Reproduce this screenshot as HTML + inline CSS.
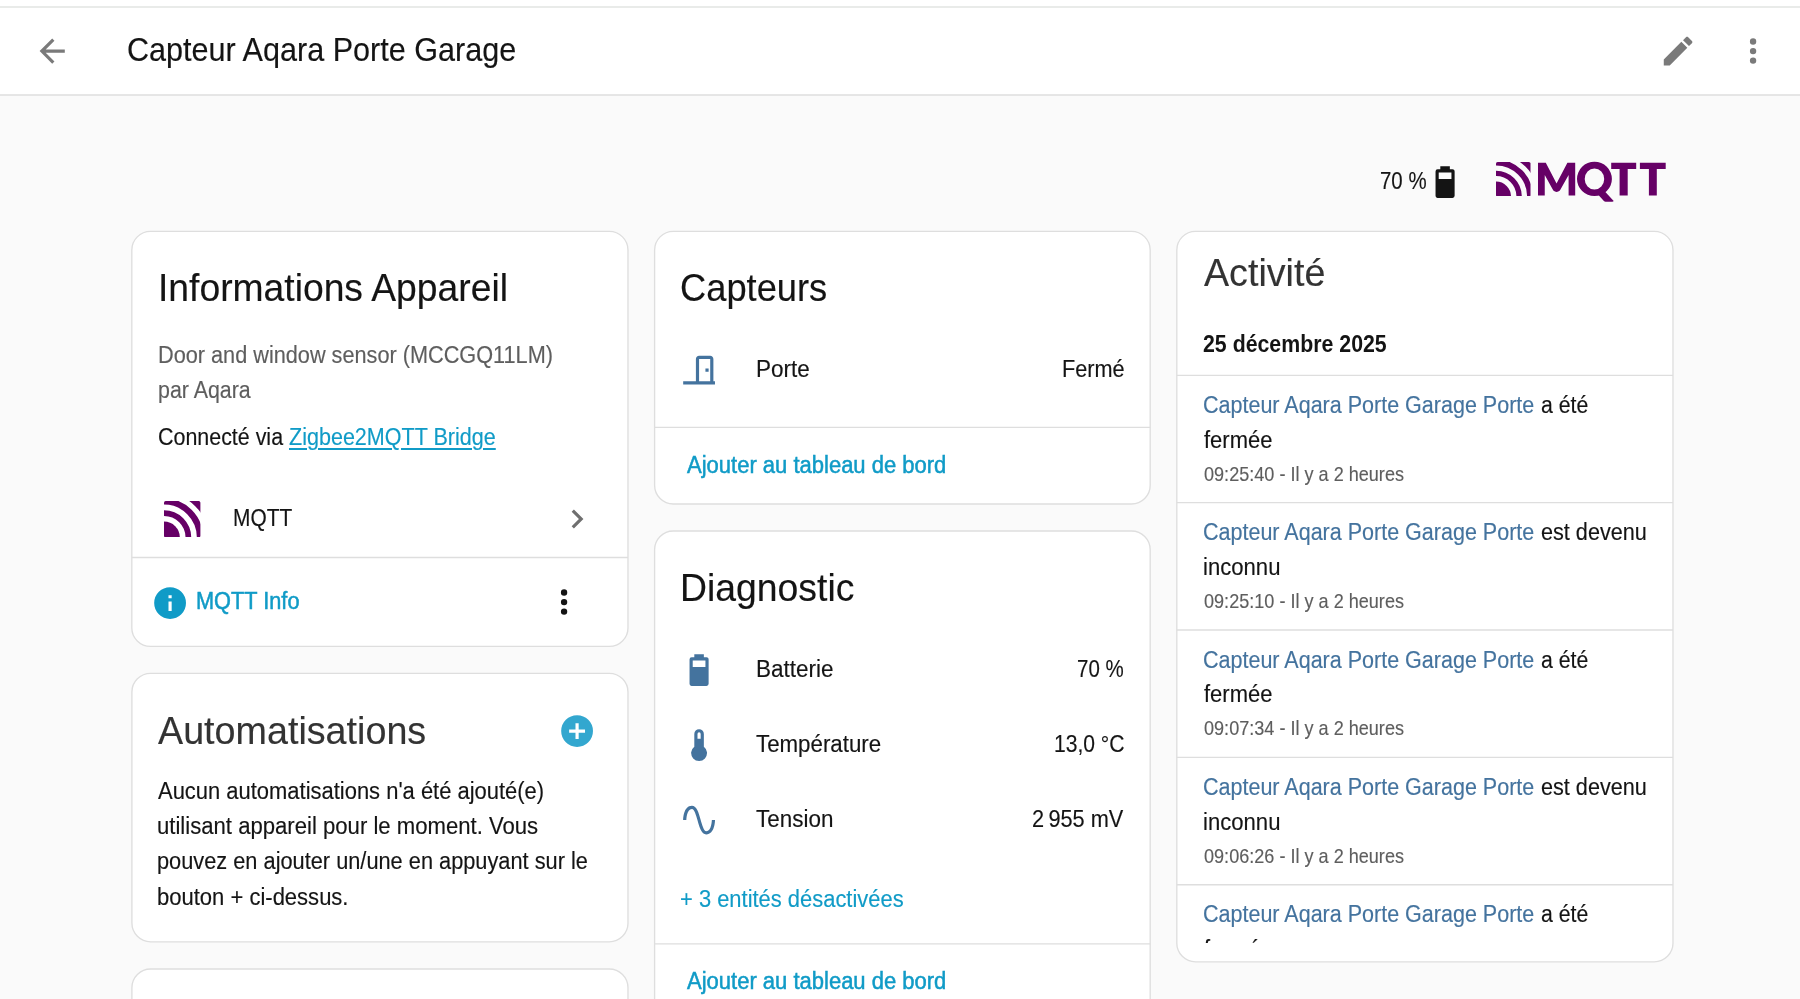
<!DOCTYPE html>
<html lang="fr"><head><meta charset="utf-8"><title>Capteur Aqara Porte Garage</title>
<style>
html,body{margin:0;padding:0}
body{width:1800px;height:999px;overflow:hidden;position:relative;background:#fafafa;font-family:"Liberation Sans",sans-serif;color:#141414}
.t{position:absolute;white-space:pre;margin:0;transform-origin:0 0}
.card{position:absolute;box-sizing:border-box;background:#fff;border:1.6px solid #e0e0e0;border-radius:19px}
.hr{position:absolute;height:1.6px;background:#e0e0e0}
svg{display:block}
.ic{position:absolute;width:38.16px;height:38.16px}
#clip{position:absolute;left:1177px;top:232px;width:496px;height:711px;overflow:hidden}
</style></head><body>

<svg style="position:absolute;left:0;top:0" width="1800" height="999" viewBox="0 0 1800 999"><rect x="0" y="0" width="1800" height="95" fill="#fff"/><line x1="0" y1="95.0" x2="1800" y2="95.0" stroke="#dedede" stroke-width="1.35"/><line x1="0" y1="7.0" x2="1800" y2="7.0" stroke="#e2e4e2" stroke-width="1.5"/><rect x="131.8" y="231.4" width="496.2" height="415.0" rx="18.75" fill="#fff" stroke="#dedede" stroke-width="1.35"/><rect x="131.9" y="673.3" width="496.1" height="268.5" rx="18.75" fill="#fff" stroke="#dedede" stroke-width="1.35"/><rect x="131.9" y="969.0" width="496.1" height="231.0" rx="18.75" fill="#fff" stroke="#dedede" stroke-width="1.35"/><rect x="654.6" y="231.4" width="495.6" height="272.6" rx="18.75" fill="#fff" stroke="#dedede" stroke-width="1.35"/><rect x="654.6" y="531.0" width="495.6" height="669.0" rx="18.75" fill="#fff" stroke="#dedede" stroke-width="1.35"/><rect x="1176.8" y="231.4" width="496.2" height="730.4" rx="18.75" fill="#fff" stroke="#dedede" stroke-width="1.35"/><line x1="131.8" y1="557.45" x2="628.0" y2="557.45" stroke="#dedede" stroke-width="1.35"/><line x1="654.6" y1="427.30" x2="1150.2" y2="427.30" stroke="#dedede" stroke-width="1.35"/><line x1="654.6" y1="943.80" x2="1150.2" y2="943.80" stroke="#dedede" stroke-width="1.35"/><line x1="1176.8" y1="375.30" x2="1673.0" y2="375.30" stroke="#dedede" stroke-width="1.35"/><line x1="1176.8" y1="502.65" x2="1673.0" y2="502.65" stroke="#dedede" stroke-width="1.35"/><line x1="1176.8" y1="630.00" x2="1673.0" y2="630.00" stroke="#dedede" stroke-width="1.35"/><line x1="1176.8" y1="757.35" x2="1673.0" y2="757.35" stroke="#dedede" stroke-width="1.35"/><line x1="1176.8" y1="884.70" x2="1673.0" y2="884.70" stroke="#dedede" stroke-width="1.35"/></svg>
<svg class="ic" style="left:32.89px;top:31.77px" viewBox="0 0 24 24"><path fill="#7a7a7a" d="M20,11V13H8L13.5,18.5L12.08,19.92L4.16,12L12.08,4.08L13.5,5.5L8,11H20Z"/></svg>
<svg class="ic" style="left:1658.72px;top:31.57px" viewBox="0 0 24 24"><path fill="#7a7a7a" d="M20.71,7.04C21.1,6.65 21.1,6 20.71,5.63L18.37,3.29C18,2.9 17.35,2.9 16.96,3.29L15.12,5.12L18.87,8.87M3,17.25V21H6.75L17.81,9.93L14.06,6.18L3,17.25Z"/></svg>
<svg class="ic" style="left:1733.82px;top:31.82px" viewBox="0 0 24 24"><path fill="#7a7a7a" d="M12,16A2,2 0 0,1 14,18A2,2 0 0,1 12,20A2,2 0 0,1 10,18A2,2 0 0,1 12,16M12,10A2,2 0 0,1 14,12A2,2 0 0,1 12,14A2,2 0 0,1 10,12A2,2 0 0,1 12,10M12,4A2,2 0 0,1 14,6A2,2 0 0,1 12,8A2,2 0 0,1 10,6A2,2 0 0,1 12,4Z"/></svg>
<svg class="ic" style="left:1425.72px;top:162.57px" viewBox="0 0 24 24"><path fill="#141414" d="M16,10H8V6H16M16.67,4H15V2H9V4H7.33A1.33,1.33 0 0,0 6,5.33V20.67C6,21.4 6.6,22 7.33,22H16.67A1.33,1.33 0 0,0 18,20.67V5.33C18,4.6 17.4,4 16.67,4Z"/></svg>
<svg class="ic" style="left:557.75px;top:500.12px" viewBox="0 0 24 24"><path fill="#6f6f6f" d="M8.59,16.58L13.17,12L8.59,7.41L10,6L16,12L10,18L8.59,16.58Z"/></svg>
<svg class="ic" style="left:544.92px;top:583.42px" viewBox="0 0 24 24"><path fill="#141414" d="M12,16A2,2 0 0,1 14,18A2,2 0 0,1 12,20A2,2 0 0,1 10,18A2,2 0 0,1 12,16M12,10A2,2 0 0,1 14,12A2,2 0 0,1 12,14A2,2 0 0,1 10,12A2,2 0 0,1 12,10M12,4A2,2 0 0,1 14,6A2,2 0 0,1 12,8A2,2 0 0,1 10,6A2,2 0 0,1 12,4Z"/></svg>
<svg class="ic" style="left:151.22px;top:583.52px" viewBox="0 0 24 24"><path fill="#109bc7" d="M13,9H11V7H13M13,17H11V11H13M12,2A10,10 0 0,0 2,12A10,10 0 0,0 12,22A10,10 0 0,0 22,12A10,10 0 0,0 12,2Z"/></svg>
<svg class="ic" style="left:558.02px;top:711.57px" viewBox="0 0 24 24"><path fill="#33a7cf" d="M17,13H13V17H11V13H7V11H11V7H13V11H17M12,2A10,10 0 0,0 2,12A10,10 0 0,0 12,22A10,10 0 0,0 22,12A10,10 0 0,0 12,2Z"/></svg>
<svg class="ic" style="left:680.32px;top:350.92px" viewBox="0 0 24 24"><path fill="#44739e" d="M16,11H18V13H16V11M12,3H19C20.11,3 21,3.89 21,5V19H22V21H2V19H10V5C10,3.89 10.89,3 12,3M12,5V19H19V5H12Z"/></svg>
<svg class="ic" style="left:680.32px;top:650.52px" viewBox="0 0 24 24"><path fill="#44739e" d="M16,10H8V6H16M16.67,4H15V2H9V4H7.33A1.33,1.33 0 0,0 6,5.33V20.67C6,21.4 6.6,22 7.33,22H16.67A1.33,1.33 0 0,0 18,20.67V5.33C18,4.6 17.4,4 16.67,4Z"/></svg>
<svg class="ic" style="left:680.17px;top:725.82px" viewBox="0 0 24 24"><path fill="#44739e" d="M15 13V5A3 3 0 0 0 9 5V13A5 5 0 1 0 15 13M12 4A1 1 0 0 1 13 5V8H11V5A1 1 0 0 1 12 4Z"/></svg>
<svg class="ic" style="left:680.30px;top:800.92px" viewBox="0 0 24 24"><path fill="#44739e" d="M16.5,21C13.5,21 12.31,16.76 11.05,12.28C10.14,9.04 9,5 7.5,5C4.11,5 4,11.93 4,12H2C2,11.63 2.06,3 7.5,3C10.5,3 11.71,7.25 12.97,11.74C13.83,14.8 15,19 16.5,19C19.94,19 20.03,12.07 20.03,12H22.03C22.03,12.37 21.97,21 16.5,21Z"/></svg>
<svg style="position:absolute;left:1496.15px;top:161.70px" width="34.50" height="34.50" viewBox="0 0 34.50 34.50"><clipPath id="c1496"><rect width="34.50" height="34.50" rx="1.60"/></clipPath><g clip-path="url(#c1496)" fill="none" stroke="#660066"><circle cx="0" cy="34.50" r="15.00" fill="#660066" stroke="none"/><circle cx="0" cy="34.50" r="23.10" stroke-width="5.40"/><circle cx="0" cy="34.50" r="34.05" stroke-width="5.90"/><circle cx="0" cy="34.50" r="46.00" stroke-width="8.20"/></g></svg>
<svg style="position:absolute;left:164.40px;top:500.90px" width="36.40" height="36.40" viewBox="0 0 36.40 36.40"><clipPath id="c164"><rect width="36.40" height="36.40" rx="1.69"/></clipPath><g clip-path="url(#c164)" fill="none" stroke="#660066"><circle cx="0" cy="36.40" r="15.83" fill="#660066" stroke="none"/><circle cx="0" cy="36.40" r="24.37" stroke-width="5.70"/><circle cx="0" cy="36.40" r="35.93" stroke-width="6.22"/><circle cx="0" cy="36.40" r="48.53" stroke-width="8.65"/></g></svg>
<svg style="position:absolute;left:1530px;top:155px" width="145" height="52" viewBox="1530 155 145 52" fill="#660066">
<path d="M1538,162.8H1545.8L1556.55,183.6L1567.4,162.8H1575.2V195.6H1568.6V175L1559.9,190.6Q1556.6,193.2 1553.3,190.6L1544.75,175V195.6H1538Z"/>
<path fill-rule="evenodd" d="M1594.45,161.8A17.45,17.15 0 1 0 1594.45,196.1A17.45,17.15 0 1 0 1594.45,161.8ZM1594.45,168.4A9.75,10.55 0 1 1 1594.45,189.5A9.75,10.55 0 1 1 1594.45,168.4Z"/>
<path d="M1604.9,191.6L1613.7,201.0Q1613.2,201.7 1612.3,201.7H1605.6Q1604.6,201.7 1603.9,200.9L1598.2,194.8Z"/>
<path d="M1611.2,162.8H1636.2V169H1627.7V195.6H1619.6V169H1611.2Z"/>
<path d="M1639.9,162.8H1665.7V169H1656.8V195.6H1648.9V169H1639.9Z"/>
</svg>
<div id="txt" style="position:absolute;left:0;top:0;width:1800px;height:999px;transform:translateZ(0);will-change:transform">
<div class="t" style="left:127.37px;top:25.00px;font-size:33.0px;line-height:49.5px;transform:scaleX(0.9265);color:#141414;-webkit-text-stroke:0.15px #141414">Capteur Aqara Porte Garage</div>
<div class="t" style="left:1379.91px;top:164.00px;font-size:23.0px;line-height:34.5px;transform:scaleX(0.8887);color:#141414;-webkit-text-stroke:0.15px #141414">70 %</div>
<div class="t" style="left:157.67px;top:258.00px;font-size:39.5px;line-height:59.25px;transform:scaleX(0.9431);color:#141414;-webkit-text-stroke:0.15px #141414">Informations Appareil</div>
<div class="t" style="left:157.86px;top:338.00px;font-size:23.0px;line-height:34.5px;transform:scaleX(0.9430);color:#5e5e5e;-webkit-text-stroke:0.15px #5e5e5e">Door and window sensor (MCCGQ11LM)</div>
<div class="t" style="left:157.57px;top:373.00px;font-size:23.0px;line-height:34.5px;transform:scaleX(0.9300);color:#5e5e5e;-webkit-text-stroke:0.15px #5e5e5e">par Aqara</div>
<div class="t" style="left:157.57px;top:420.00px;font-size:23.0px;line-height:34.5px;transform:scaleX(0.9314);color:#141414;-webkit-text-stroke:0.15px #141414">Connecté via</div>
<div class="t" style="left:289.20px;top:420.00px;font-size:23.0px;line-height:34.5px;transform:scaleX(0.9367);color:#109bc7;-webkit-text-stroke:0.15px #109bc7;text-decoration:underline;text-decoration-thickness:1.5px;text-underline-offset:3px">Zigbee2MQTT Bridge</div>
<div class="t" style="left:232.99px;top:501.00px;font-size:23.0px;line-height:34.5px;transform:scaleX(0.9095);color:#141414;-webkit-text-stroke:0.15px #141414">MQTT</div>
<div class="t" style="left:195.75px;top:584.00px;font-size:23.0px;line-height:34.5px;transform:scaleX(0.9453);color:#109bc7;-webkit-text-stroke:0.5px #109bc7">MQTT Info</div>
<div class="t" style="left:158.30px;top:701.00px;font-size:39.5px;line-height:59.25px;transform:scaleX(0.9544);color:#333333;-webkit-text-stroke:0.15px #333333">Automatisations</div>
<div class="t" style="left:158.30px;top:774.00px;font-size:23.0px;line-height:34.5px;transform:scaleX(0.9544);color:#141414;-webkit-text-stroke:0.15px #141414">Aucun automatisations n'a été ajouté(e)</div>
<div class="t" style="left:157.34px;top:809.00px;font-size:23.0px;line-height:34.5px;transform:scaleX(0.9617);color:#141414;-webkit-text-stroke:0.15px #141414">utilisant appareil pour le moment. Vous</div>
<div class="t" style="left:157.35px;top:844.00px;font-size:23.0px;line-height:34.5px;transform:scaleX(0.9466);color:#141414;-webkit-text-stroke:0.15px #141414">pouvez en ajouter un/une en appuyant sur le</div>
<div class="t" style="left:157.34px;top:880.00px;font-size:23.0px;line-height:34.5px;transform:scaleX(0.9570);color:#141414;-webkit-text-stroke:0.15px #141414">bouton + ci-dessus.</div>
<div class="t" style="left:680.16px;top:258.00px;font-size:39.5px;line-height:59.25px;transform:scaleX(0.9186);color:#141414;-webkit-text-stroke:0.15px #141414">Capteurs</div>
<div class="t" style="left:755.72px;top:352.00px;font-size:23.0px;line-height:34.5px;transform:scaleX(0.9778);color:#141414;-webkit-text-stroke:0.15px #141414">Porte</div>
<div class="t" style="left:1062.16px;top:352.00px;font-size:23.0px;line-height:34.5px;transform:scaleX(0.9419);color:#141414;-webkit-text-stroke:0.15px #141414">Fermé</div>
<div class="t" style="left:686.90px;top:448.00px;font-size:23.0px;line-height:34.5px;transform:scaleX(0.9567);color:#109bc7;-webkit-text-stroke:0.5px #109bc7">Ajouter au tableau de bord</div>
<div class="t" style="left:679.66px;top:558.00px;font-size:39.5px;line-height:59.25px;transform:scaleX(0.9454);color:#141414;-webkit-text-stroke:0.15px #141414">Diagnostic</div>
<div class="t" style="left:755.72px;top:652.00px;font-size:23.0px;line-height:34.5px;transform:scaleX(0.9784);color:#141414;-webkit-text-stroke:0.15px #141414">Batterie</div>
<div class="t" style="left:1077.31px;top:652.00px;font-size:23.0px;line-height:34.5px;transform:scaleX(0.8907);color:#141414;-webkit-text-stroke:0.15px #141414">70 %</div>
<div class="t" style="left:756.40px;top:727.00px;font-size:23.0px;line-height:34.5px;transform:scaleX(0.9694);color:#141414;-webkit-text-stroke:0.15px #141414">Température</div>
<div class="t" style="left:1053.68px;top:727.00px;font-size:23.0px;line-height:34.5px;transform:scaleX(0.9157);color:#141414;-webkit-text-stroke:0.15px #141414">13,0 °C</div>
<div class="t" style="left:756.40px;top:802.00px;font-size:23.0px;line-height:34.5px;transform:scaleX(0.9760);color:#141414;-webkit-text-stroke:0.15px #141414">Tension</div>
<div class="t" style="left:1031.66px;top:802.00px;font-size:23.0px;line-height:34.5px;transform:scaleX(0.9448);color:#141414;-webkit-text-stroke:0.15px #141414">2 955 mV</div>
<div class="t" style="left:680.15px;top:882.00px;font-size:23.0px;line-height:34.5px;transform:scaleX(0.9532);color:#109bc7;-webkit-text-stroke:0.15px #109bc7">+ 3 entités désactivées</div>
<div class="t" style="left:687.30px;top:964.00px;font-size:23.0px;line-height:34.5px;transform:scaleX(0.9567);color:#109bc7;-webkit-text-stroke:0.5px #109bc7">Ajouter au tableau de bord</div>
<div class="t" style="left:1203.80px;top:243.00px;font-size:39.5px;line-height:59.25px;transform:scaleX(0.9529);color:#333333;-webkit-text-stroke:0.15px #333333">Activité</div>
<div class="t" style="left:1203.30px;top:327.00px;font-size:23.0px;line-height:34.5px;transform:scaleX(0.9269);color:#141414;font-weight:700">25 décembre 2025</div>
<div id="clip"><div class="t" style="left:25.76px;top:156.00px;font-size:23.0px;line-height:34.5px;transform:scaleX(0.9354);color:#44739e;-webkit-text-stroke:0.15px #44739e">Capteur Aqara Porte Garage Porte</div>
<div class="t" style="left:364.00px;top:156.00px;font-size:23.0px;line-height:34.5px;transform:scaleX(0.9253);color:#141414;-webkit-text-stroke:0.15px #141414">a été</div>
<div class="t" style="left:26.70px;top:191.00px;font-size:23.0px;line-height:34.5px;transform:scaleX(0.9549);color:#141414;-webkit-text-stroke:0.15px #141414">fermée</div>
<div class="t" style="left:26.70px;top:228.00px;font-size:19.75px;line-height:29.62px;transform:scaleX(0.9153);color:#5e5e5e;-webkit-text-stroke:0.15px #5e5e5e">09:25:40 - Il y a 2 heures</div>
<div class="t" style="left:25.76px;top:283.00px;font-size:23.0px;line-height:34.5px;transform:scaleX(0.9354);color:#44739e;-webkit-text-stroke:0.15px #44739e">Capteur Aqara Porte Garage Porte</div>
<div class="t" style="left:363.60px;top:283.00px;font-size:23.0px;line-height:34.5px;transform:scaleX(0.9406);color:#141414;-webkit-text-stroke:0.15px #141414">est devenu</div>
<div class="t" style="left:25.74px;top:318.00px;font-size:23.0px;line-height:34.5px;transform:scaleX(0.9610);color:#141414;-webkit-text-stroke:0.15px #141414">inconnu</div>
<div class="t" style="left:26.70px;top:355.00px;font-size:19.75px;line-height:29.62px;transform:scaleX(0.9153);color:#5e5e5e;-webkit-text-stroke:0.15px #5e5e5e">09:25:10 - Il y a 2 heures</div>
<div class="t" style="left:25.76px;top:411.00px;font-size:23.0px;line-height:34.5px;transform:scaleX(0.9354);color:#44739e;-webkit-text-stroke:0.15px #44739e">Capteur Aqara Porte Garage Porte</div>
<div class="t" style="left:364.00px;top:411.00px;font-size:23.0px;line-height:34.5px;transform:scaleX(0.9253);color:#141414;-webkit-text-stroke:0.15px #141414">a été</div>
<div class="t" style="left:26.70px;top:445.00px;font-size:23.0px;line-height:34.5px;transform:scaleX(0.9549);color:#141414;-webkit-text-stroke:0.15px #141414">fermée</div>
<div class="t" style="left:26.70px;top:482.00px;font-size:19.75px;line-height:29.62px;transform:scaleX(0.9153);color:#5e5e5e;-webkit-text-stroke:0.15px #5e5e5e">09:07:34 - Il y a 2 heures</div>
<div class="t" style="left:25.76px;top:538.00px;font-size:23.0px;line-height:34.5px;transform:scaleX(0.9354);color:#44739e;-webkit-text-stroke:0.15px #44739e">Capteur Aqara Porte Garage Porte</div>
<div class="t" style="left:363.60px;top:538.00px;font-size:23.0px;line-height:34.5px;transform:scaleX(0.9406);color:#141414;-webkit-text-stroke:0.15px #141414">est devenu</div>
<div class="t" style="left:25.74px;top:573.00px;font-size:23.0px;line-height:34.5px;transform:scaleX(0.9610);color:#141414;-webkit-text-stroke:0.15px #141414">inconnu</div>
<div class="t" style="left:26.70px;top:610.00px;font-size:19.75px;line-height:29.62px;transform:scaleX(0.9153);color:#5e5e5e;-webkit-text-stroke:0.15px #5e5e5e">09:06:26 - Il y a 2 heures</div>
<div class="t" style="left:25.76px;top:665.00px;font-size:23.0px;line-height:34.5px;transform:scaleX(0.9354);color:#44739e;-webkit-text-stroke:0.15px #44739e">Capteur Aqara Porte Garage Porte</div>
<div class="t" style="left:364.00px;top:665.00px;font-size:23.0px;line-height:34.5px;transform:scaleX(0.9253);color:#141414;-webkit-text-stroke:0.15px #141414">a été</div>
<div class="t" style="left:26.70px;top:700.00px;font-size:23.0px;line-height:34.5px;transform:scaleX(0.9549);color:#141414;-webkit-text-stroke:0.15px #141414">fermée</div>
<div class="t" style="left:26.70px;top:737.00px;font-size:19.75px;line-height:29.62px;transform:scaleX(0.9153);color:#5e5e5e;-webkit-text-stroke:0.15px #5e5e5e">09:00:00 - Il y a 2 heures</div></div>
</div>
</body></html>
